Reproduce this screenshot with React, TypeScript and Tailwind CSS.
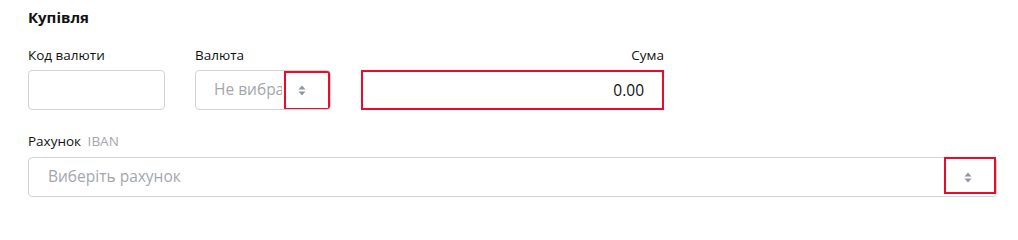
import { useState } from 'react';

const font = { fontFamily: '"Open Sans", "Noto Sans", sans-serif' };

const SortArrows = () => (
  <svg width="8" height="11" viewBox="0 0 8 11" className="fill-[#8f96a0]">
    <path d="M4 0.5 L7.5 4.5 H0.5 Z" />
    <path d="M4 10.5 L7.5 6.5 H0.5 Z" />
  </svg>
);

export default function App() {
  const [code, setCode] = useState('');
  const [amount, setAmount] = useState('0.00');

  return (
    <div className="w-[1018px] h-[212px] bg-white text-[#111] pl-[28px] pt-[7px]" style={font}>
      {/* Title */}
      <h3 className="text-[15px] font-bold leading-[20px]">Купівля</h3>

      {/* Row: currency code / currency / amount */}
      <div className="flex mt-[19px]">
        <div className="w-[137px]">
          <label className="block text-[13.5px] leading-[18px] mb-[6px]">Код валюти</label>
          <input
            value={code}
            onChange={(e) => setCode(e.target.value)}
            className="w-[137px] h-[40px] border border-[#d3d3d3] rounded-[4px] px-3 outline-none"
          />
        </div>

        <div className="w-[135px] ml-[30px]">
          <label className="block text-[13.5px] leading-[18px] mb-[6px]">Валюта</label>
          <div className="relative w-[136px] h-[40px] border border-[#d3d3d3] rounded-[4px] flex items-center overflow-hidden">
            <span className="pl-[18px] text-[15.5px] text-[#a3a7ad] whitespace-nowrap overflow-hidden w-[86px]">Не вибрано</span>
            <span className="ml-[16px]"><SortArrows /></span>
            {/* validation marker */}
            <div className="absolute right-0 top-0 w-[46px] h-[39px] border-2 border-[#ec0a2a]"></div>
          </div>
        </div>

        <div className="w-[303px] ml-[31px]">
          <label className="block text-[13.5px] leading-[18px] mb-[6px] text-right">Сума</label>
          <input
            value={amount}
            onChange={(e) => setAmount(e.target.value)}
            className="w-[303px] h-[40px] border-2 border-[#ec0a2a] text-right pr-[18px] text-[15.5px] outline-none"
          />
        </div>
      </div>

      {/* Account */}
      <div className="mt-[22px] w-[969px]">
        <label className="block text-[13.5px] leading-[18px] mb-[7px]">
          Рахунок <span className="ml-[3px] text-[#a3a7ad]">IBAN</span>
        </label>
        <div className="relative h-[40px] border border-[#d3d3d3] rounded-[4px] flex items-center justify-between">
          <span className="pl-[19px] text-[15.5px] text-[#a3a7ad]">Виберіть рахунок</span>
          <span className="mr-[24px]"><SortArrows /></span>
          <div className="absolute right-0 -top-px w-[52px] h-[37px] border-2 border-[#ec0a2a]"></div>
        </div>
      </div>
    </div>
  );
}
